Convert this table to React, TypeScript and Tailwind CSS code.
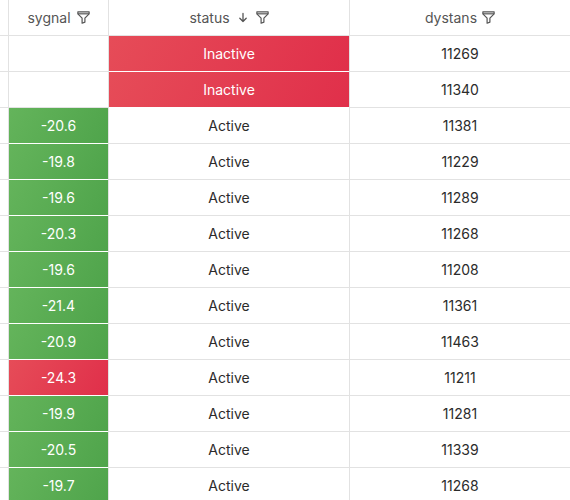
import React from "react";

type Row = { s: string; st: "Active" | "Inactive"; d: string; sRed?: boolean };

const rows: Row[] = [
  { s: "", st: "Inactive", d: "11269" },
  { s: "", st: "Inactive", d: "11340" },
  { s: "-20.6", st: "Active", d: "11381" },
  { s: "-19.8", st: "Active", d: "11229" },
  { s: "-19.6", st: "Active", d: "11289" },
  { s: "-20.3", st: "Active", d: "11268" },
  { s: "-19.6", st: "Active", d: "11208" },
  { s: "-21.4", st: "Active", d: "11361" },
  { s: "-20.9", st: "Active", d: "11463" },
  { s: "-24.3", st: "Active", d: "11211", sRed: true },
  { s: "-19.9", st: "Active", d: "11281" },
  { s: "-20.5", st: "Active", d: "11339" },
  { s: "-19.7", st: "Active", d: "11268" },
];

function Funnel() {
  return (
    <svg width="13" height="13" viewBox="0 0 12 12" fill="none" stroke="#555" strokeWidth="1.1" strokeLinejoin="round">
      <path d="M0.8 0.8h10.4v1.8L7.3 6.6v3.7L4.7 11.3V6.6L0.8 2.6z" />
      <path d="M0.8 2.6h10.4" />
    </svg>
  );
}

function ArrowDown() {
  return (
    <svg width="10" height="11" viewBox="0 0 10 11" fill="none" stroke="#555" strokeWidth="1.3" strokeLinecap="round" strokeLinejoin="round">
      <path d="M5 1.5v8M1.8 6.3L5 9.5l3.2-3.2" />
    </svg>
  );
}

const red = "bg-[linear-gradient(120deg,#e64c58,#e02f4a)] text-white";
const green = "bg-[linear-gradient(120deg,#64b45b,#4fa44b)] text-white";

export default function App() {
  return (
    <div
      className="w-[570px] h-[500px] overflow-hidden bg-white text-[14px] text-[#2b2b2b]"
      style={{ fontFamily: "Inter, 'Noto Sans', sans-serif" }}
    >
      <div className="grid grid-cols-[9px_100px_241px_1fr] h-[36px] text-[#555]">
        <div className="border-r border-b border-[#e2e2e2]" />
        <div className="border-r border-b border-[#e2e2e2] flex items-center justify-center gap-[6px]">
          <span>sygnal</span>
          <Funnel />
        </div>
        <div className="border-r border-b border-[#e2e2e2] flex items-center justify-center gap-[8px]">
          <span>status</span>
          <ArrowDown />
          <Funnel />
        </div>
        <div className="border-b border-[#e2e2e2] flex items-center justify-center gap-[5px]">
          <span>dystans</span>
          <Funnel />
        </div>
      </div>
      {rows.map((r, i) => (
        <div key={i} className="grid grid-cols-[9px_100px_241px_1fr] h-[36px]">
          <div className="border-r border-b border-[#e2e2e2]" />
          <div className="border-r border-[#e2e2e2] flex flex-col">
            <div
              className={
                "flex-1 flex items-center justify-center border-b " +
                (r.s === "" ? "border-[#e2e2e2]" : r.sRed ? red + " border-white" : green + " border-white")
              }
            >
              {r.s}
            </div>
          </div>
          <div className="border-r border-[#e2e2e2] flex flex-col">
            <div
              className={
                "flex-1 flex items-center justify-center border-b " +
                (r.st === "Inactive" ? red + " border-white" : "border-[#e2e2e2]")
              }
            >
              {r.st}
            </div>
          </div>
          <div className="border-b border-[#e2e2e2] flex items-center justify-center">{r.d}</div>
        </div>
      ))}
    </div>
  );
}
